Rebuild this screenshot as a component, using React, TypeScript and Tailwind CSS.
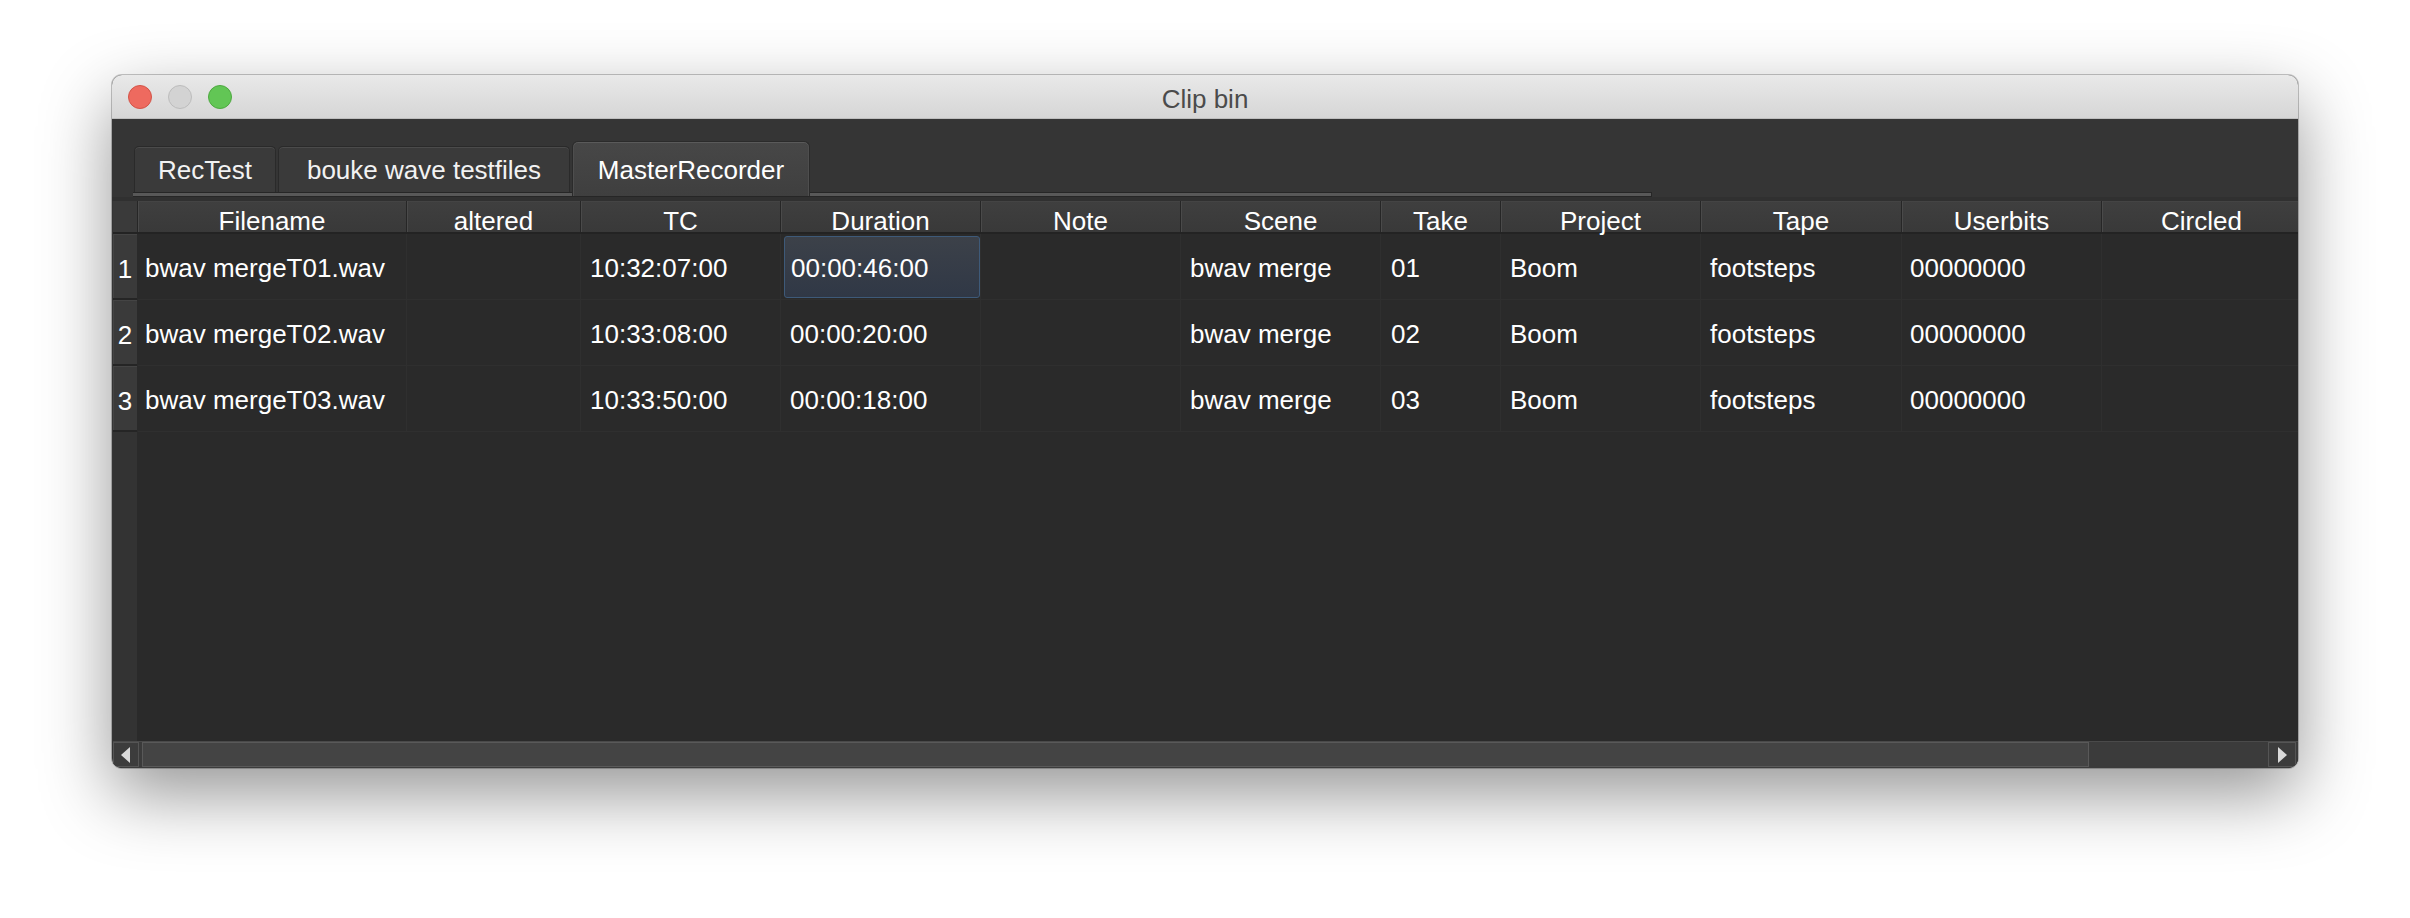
import React from "react";

type Column = { label: string; w: string; pad: string };

const columns: Column[] = [
  { label: "Filename", w: "w-[269px]", pad: "pl-[7px]" },
  { label: "altered", w: "w-[174px]", pad: "pl-[9px]" },
  { label: "TC", w: "w-[200px]", pad: "pl-[9px]" },
  { label: "Duration", w: "w-[200px]", pad: "pl-[9px]" },
  { label: "Note", w: "w-[200px]", pad: "pl-[9px]" },
  { label: "Scene", w: "w-[200px]", pad: "pl-[9px]" },
  { label: "Take", w: "w-[120px]", pad: "pl-[10px]" },
  { label: "Project", w: "w-[200px]", pad: "pl-[9px]" },
  { label: "Tape", w: "w-[201px]", pad: "pl-[9px]" },
  { label: "Userbits", w: "w-[200px]", pad: "pl-[8px]" },
  { label: "Circled", w: "w-[200px]", pad: "pl-[8px]" },
];

const rows: string[][] = [
  ["bwav mergeT01.wav", "", "10:32:07:00", "00:00:46:00", "", "bwav merge", "01", "Boom", "footsteps", "00000000", ""],
  ["bwav mergeT02.wav", "", "10:33:08:00", "00:00:20:00", "", "bwav merge", "02", "Boom", "footsteps", "00000000", ""],
  ["bwav mergeT03.wav", "", "10:33:50:00", "00:00:18:00", "", "bwav merge", "03", "Boom", "footsteps", "00000000", ""],
];

const tabs = [
  { label: "RecTest", w: "w-[142px]" },
  { label: "bouke wave testfiles", w: "w-[292px]" },
];

function TrafficLights() {
  return (
    <div className="flex items-center gap-[16px] pl-[16px]">
      <span className="w-[24px] h-[24px] rounded-full bg-[#ee6a5f] border border-[#d25448]" />
      <span className="w-[24px] h-[24px] rounded-full bg-[#d3d3d3] border border-[#bcbcbc]" />
      <span className="w-[24px] h-[24px] rounded-full bg-[#62c655] border border-[#4ea840]" />
    </div>
  );
}

function ArrowLeft() {
  return (
    <svg width="10" height="16" viewBox="0 0 10 16">
      <polygon points="9,0 9,16 0,8" fill="#dadada" />
    </svg>
  );
}

function ArrowRight() {
  return (
    <svg width="10" height="16" viewBox="0 0 10 16">
      <polygon points="1,0 1,16 10,8" fill="#dadada" />
    </svg>
  );
}

export default function App() {
  return (
    <div className="w-[2410px] h-[918px] bg-white pl-[112px] pt-[75px] font-['Liberation_Sans',Arial,sans-serif] overflow-hidden">
      <div className="w-[2186px] h-[693px] rounded-[10px] overflow-hidden flex flex-col bg-[#353535] shadow-[0_26px_70px_rgba(0,0,0,0.42),0_0_0_1px_rgba(0,0,0,0.22)]">
        {/* title bar */}
        <div className="h-[44px] shrink-0 grid grid-cols-[1fr_auto_1fr] items-center bg-linear-to-b from-[#e9e9e9] to-[#d6d6d6] border-b border-[#bebebe]">
          <TrafficLights />
          <div className="h-[44px] pt-[5px] text-[26px] leading-[39px] text-[#4b4b4b]">Clip bin</div>
          <div />
        </div>

        {/* body */}
        <div className="flex-1 flex flex-col pt-[22px] min-h-0">
          {/* tab strip */}
          <div className="h-[51px] shrink-0 flex items-end gap-[2px] pl-[22px] relative z-10">
            {tabs.map((t) => (
              <div
                key={t.label}
                className={`${t.w} h-[46px] text-center rounded-t-[5px] bg-[#3a3a3a] border border-[#2a2a2a] border-b-0 shadow-[inset_0_1px_0_#4b4b4b] text-[26px] leading-[46px] text-[#f2f2f2] whitespace-nowrap`}
              >
                {t.label}
              </div>
            ))}
            <div className="w-[238px] h-[55px] -mb-[4px] text-center pt-[5px] rounded-t-[6px] bg-linear-to-b from-[#474747] to-[#3f3f3f] border border-[#2b2b2b] border-b-0 shadow-[inset_0_1px_0_#5a5a5a,inset_1px_0_0_#4e4e4e,inset_-1px_0_0_#4e4e4e] text-[26px] leading-[46px] text-white whitespace-nowrap">
              MasterRecorder
            </div>
          </div>
          <div className="ml-[21px] w-[1519px] h-[5px] shrink-0 bg-[#585858] border-y border-[#262626] border-r" />
          <div className="h-[4px] shrink-0 bg-[#303030]" />

          {/* table */}
          <div className="flex-1 min-h-0 flex flex-col ml-[1px] bg-[#2a2a2a] overflow-hidden">
            {/* header */}
            <div className="h-[33px] shrink-0 flex border-b-2 border-[#232323] bg-[#3b3b3b]">
              <div className="w-[25px] shrink-0 bg-[#3a3a3a] border-r border-[#262626]" />
              {columns.map((c) => (
                <div
                  key={c.label}
                  className={`${c.w} shrink-0 h-full border-r border-[#262626] shadow-[inset_1px_0_0_#4a4a4a,inset_0_1px_0_#444444] bg-linear-to-b from-[#3f3f3f] to-[#393939] text-center text-[26px] leading-[22px] pt-[9px] text-white whitespace-nowrap`}
                >
                  {c.label}
                </div>
              ))}
            </div>

            {/* rows */}
            <div className="flex-1 min-h-0 flex">
              <div className="w-[25px] shrink-0 bg-[#333333] border-r border-[#2a2a2a] flex flex-col">
                {rows.map((_, i) => (
                  <div
                    key={i}
                    className="h-[66px] shrink-0 bg-[#3a3a3a] border-b-2 border-[#252525] shadow-[inset_1px_1px_0_#444444] text-center text-[26px] leading-[70px] text-white"
                  >
                    {i + 1}
                  </div>
                ))}
              </div>
              <div className="flex-1 min-w-0 flex flex-col overflow-hidden">
                {rows.map((r, ri) => (
                  <div key={ri} className="h-[66px] shrink-0 flex">
                    {columns.map((c, ci) => {
                      const selected = ri === 0 && ci === 3;
                      return (
                        <div
                          key={c.label}
                          className={`${c.w} shrink-0 h-full border-r border-b border-[#2f2f2f] text-[26px] text-white whitespace-nowrap overflow-hidden`}
                        >
                          {selected ? (
                            <div className="ml-[3px] mt-[2px] h-[62px] rounded-[3px] border border-[#3e5a79] bg-linear-to-b from-[#3c4149] to-[#303846] pl-[6px] leading-[63px]">
                              {r[ci]}
                            </div>
                          ) : (
                            <div className={`${c.pad} leading-[68px]`}>{r[ci]}</div>
                          )}
                        </div>
                      );
                    })}
                  </div>
                ))}
              </div>
            </div>

            {/* horizontal scroll bar */}
            <div className="h-[27px] shrink-0 flex bg-[#3b3b3b] border-t border-[#4a4a4a]">
              <div className="w-[26px] h-[25px] shrink-0 flex items-center justify-center border border-[#555555] bg-[#3c3c3c]">
                <ArrowLeft />
              </div>
              <div className="w-[3px] shrink-0" />
              <div className="w-[1947px] h-[25px] shrink-0 bg-[#444444] border border-[#595959]" />
              <div className="flex-1" />
              <div className="w-[28px] h-[25px] shrink-0 mr-[2px] flex items-center justify-center border border-[#555555] bg-[#3c3c3c]">
                <ArrowRight />
              </div>
            </div>
          </div>
        </div>
      </div>
    </div>
  );
}
